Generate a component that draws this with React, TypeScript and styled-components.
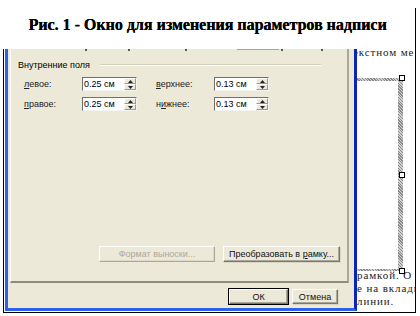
import React from "react";
import styled, { createGlobalStyle } from "styled-components";

const GlobalStyle = createGlobalStyle`
  html, body {
    margin: 0;
    padding: 0;
    background: #fff;
  }
  body {
    width: 420px;
    height: 316px;
    overflow: hidden;
  }
`;

const Sheet = styled.div`
  margin-top: 8px;
  width: 415px;
  height: 305px;
  border-right: 1px solid #000;
  display: flex;
  flex-direction: column;
`;

const Caption = styled.div`
  height: 41px;
  flex-shrink: 0;
  box-sizing: border-box;
  padding-top: 8px;
  text-align: center;
  font: bold 16px/18px "Liberation Serif", serif;
  color: #000;
  text-shadow: 0.3px 0 0 #000;
`;

const Frame = styled.div`
  flex: 1;
  min-height: 0;
  margin-left: 3px;
  border-left: 1px solid #000;
  border-bottom: 1px solid #000;
  display: flex;
`;

const Dialog = styled.div`
  box-sizing: border-box;
  width: 352px;
  flex-shrink: 0;
  margin: 0 0 1px 1px;
  border: 3px solid #2a62ea;
  border-top: none;
  border-right-color: #0a27b4;
  background: #ece9d8;
  display: flex;
  flex-direction: column;
  padding: 0 5px 0 2px;
  font: 9px "Liberation Sans", Arial, sans-serif;
  color: #000;
`;

const Panel = styled.div`
  flex: 1;
  display: flex;
  flex-direction: column;
  border-left: 1px solid #fbfbf8;
  border-right: 2px solid #aca899;
  border-bottom: 2px solid #8f8c7f;
`;

const Ticks = styled.div`
  height: 3px;
  display: flex;
  align-items: flex-start;
`;

const Tick = styled.span<{ $gap: number; $w: number; $light?: boolean }>`
  margin-left: ${(p) => p.$gap}px;
  width: ${(p) => p.$w}px;
  height: ${(p) => (p.$light ? 1 : 2)}px;
  background: ${(p) => (p.$light ? "#a8a596" : "#5a5a52")};
`;

const GroupHead = styled.div`
  margin-top: 8px;
  height: 10px;
  display: flex;
  align-items: center;
  padding-left: 7px;
`;

const GroupLine = styled.span`
  flex: 1;
  margin: 0 26px 0 10px;
  border-top: 1px solid #d0d0bf;
  border-bottom: 1px solid #fff;
`;

const Rows = styled.div`
  margin-top: 7px;
  display: flex;
  flex-direction: column;
  gap: 6px;
  padding-left: 13px;
`;

const Row = styled.div`
  display: flex;
  align-items: center;
  gap: 19px;
`;

const Pair = styled.div`
  display: flex;
  align-items: center;
`;

const Label = styled.label`
  width: 58px;
  color: #222;
  u {
    text-decoration: underline;
  }
`;

const Spin = styled.div`
  box-sizing: border-box;
  width: 55px;
  height: 14px;
  display: flex;
  background: #fff;
  border: 1px solid;
  border-color: #6f6f6f #f4f4f0 #f4f4f0 #6f6f6f;
`;

const SpinValue = styled.span`
  flex: 1;
  padding-left: 1px;
  line-height: 12px;
  font-size: 9px;
`;

const SpinButtons = styled.div`
  width: 12px;
  display: flex;
  flex-direction: column;
`;

const SpinHalf = styled.div`
  flex: 1;
  display: flex;
  align-items: center;
  justify-content: center;
  background: #ece9d8;
  border: 1px solid;
  border-color: #fff #9d9a8c #9d9a8c #fff;
  box-sizing: border-box;
`;

const Spacer = styled.div`
  flex: 1;
`;

const ButtonRow = styled.div`
  display: flex;
  justify-content: flex-end;
  gap: 8px;
  padding-right: 7px;
  margin-bottom: 19px;
`;

const Button = styled.button<{ $w: number; $h: number; $default?: boolean }>`
  box-sizing: border-box;
  width: ${(p) => p.$w}px;
  height: ${(p) => p.$h}px;
  padding: 0;
  font: 9px "Liberation Sans", Arial, sans-serif;
  color: #111;
  background: #ece9d8;
  border: 1px solid;
  border-color: #fff #7c796c #7c796c #fff;
  box-shadow: ${(p) =>
    p.$default ? "0 0 0 1px #000, inset -1px -1px 0 #aca899" : "1px 1px 0 #d9d6c6, inset -1px -1px 0 #aca899"};
  &:disabled {
    color: #aca899;
    border-color: #fff #aca899 #aca899 #fff;
    box-shadow: inset -1px -1px 0 #ddd9c8;
  }
  u {
    text-decoration: underline;
  }
`;

const Footer = styled.div`
  margin: 6px 0 4px;
  display: flex;
  justify-content: flex-end;
  gap: 4px;
  padding-right: 11px;
`;

const Doc = styled.div`
  flex: 1;
  min-width: 0;
  overflow: hidden;
  background: #fff;
  display: flex;
  flex-direction: column;
  font: 11px/13px "Liberation Serif", serif;
  letter-spacing: 0.9px;
  white-space: nowrap;
  color: #222;
`;

const DocLine = styled.div<{ $shift?: number }>`
  margin-left: ${(p) => p.$shift ?? 0}px;
`;

const TopText = styled.div`
  margin-top: -3px;
  height: 13px;
`;

const TextBox = styled.div`
  position: relative;
  margin: 19px 0 0 -12px;
  width: 58px;
  height: 193px;
  box-sizing: border-box;
  padding: 3px 5px 2px 3px;
  background: repeating-linear-gradient(45deg, #8a8a8a 0 1px, #d2d2d2 1px 2px);
  flex-shrink: 0;
`;

const TextBoxInner = styled.div`
  height: 100%;
  background: #fff;
`;

const Handle = styled.span<{ $pos: "top" | "mid" | "bottom" }>`
  position: absolute;
  right: -2px;
  width: 4px;
  height: 4px;
  background: #fff;
  border: 1px solid #000;
  top: ${(p) => (p.$pos === "top" ? "-3px" : p.$pos === "mid" ? "calc(50% - 3px)" : "auto")};
  bottom: ${(p) => (p.$pos === "bottom" ? "-3px" : "auto")};
`;

const BottomText = styled.div`
  margin-top: -2px;
`;

const Arrow = ({ up }: { up?: boolean }) => (
  <svg width="5" height="3" viewBox="0 0 5 3">
    <path d={up ? "M0 3 L2.5 0 L5 3 Z" : "M0 0 L2.5 3 L5 0 Z"} fill="#222" />
  </svg>
);

const Field = ({ label, acc, value }: { label: string; acc: number; value: string }) => (
  <Pair>
    <Label>
      {label.slice(0, acc)}
      <u>{label[acc]}</u>
      {label.slice(acc + 1)}
    </Label>
    <Spin>
      <SpinValue>{value}</SpinValue>
      <SpinButtons>
        <SpinHalf>
          <Arrow up />
        </SpinHalf>
        <SpinHalf>
          <Arrow />
        </SpinHalf>
      </SpinButtons>
    </Spin>
  </Pair>
);

const App = () => {
  return (
    <>
      <GlobalStyle />
      <Sheet>
        <Caption>Рис. 1 - Окно для изменения параметров надписи</Caption>
        <Frame>
          <Dialog>
            <Panel>
              <Ticks>
                <Tick $gap={74} $w={2} />
                <Tick $gap={41} $w={2} />
                <Tick $gap={55} $w={2} />
                <Tick $gap={50} $w={42} $light />
                <Tick $gap={2} $w={2} />
                <Tick $gap={38} $w={2} />
              </Ticks>
              <GroupHead>
                Внутренние поля
                <GroupLine />
              </GroupHead>
              <Rows>
                <Row>
                  <Field label="левое:" acc={0} value="0.25 см" />
                  <Field label="верхнее:" acc={0} value="0.13 см" />
                </Row>
                <Row>
                  <Field label="правое:" acc={0} value="0.25 см" />
                  <Field label="нижнее:" acc={1} value="0.13 см" />
                </Row>
              </Rows>
              <Spacer />
              <ButtonRow>
                <Button $w={116} $h={16} disabled>
                  Формат выноски...
                </Button>
                <Button $w={117} $h={16}>
                  Преобразовать в <u>р</u>амку...
                </Button>
              </ButtonRow>
            </Panel>
            <Footer>
              <Button $w={59} $h={15} $default>
                ОК
              </Button>
              <Button $w={46} $h={15}>
                Отмена
              </Button>
            </Footer>
          </Dialog>
          <Doc>
            <TopText>
              <DocLine $shift={-4}>екстном ме</DocLine>
            </TopText>
            <TextBox>
              <TextBoxInner />
              <Handle $pos="top" />
              <Handle $pos="mid" />
              <Handle $pos="bottom" />
            </TextBox>
            <BottomText>
              <DocLine>рамкой. О</DocLine>
              <DocLine>е на вкладке</DocLine>
              <DocLine>линии.</DocLine>
            </BottomText>
          </Doc>
        </Frame>
      </Sheet>
    </>
  );
};

export default App;
